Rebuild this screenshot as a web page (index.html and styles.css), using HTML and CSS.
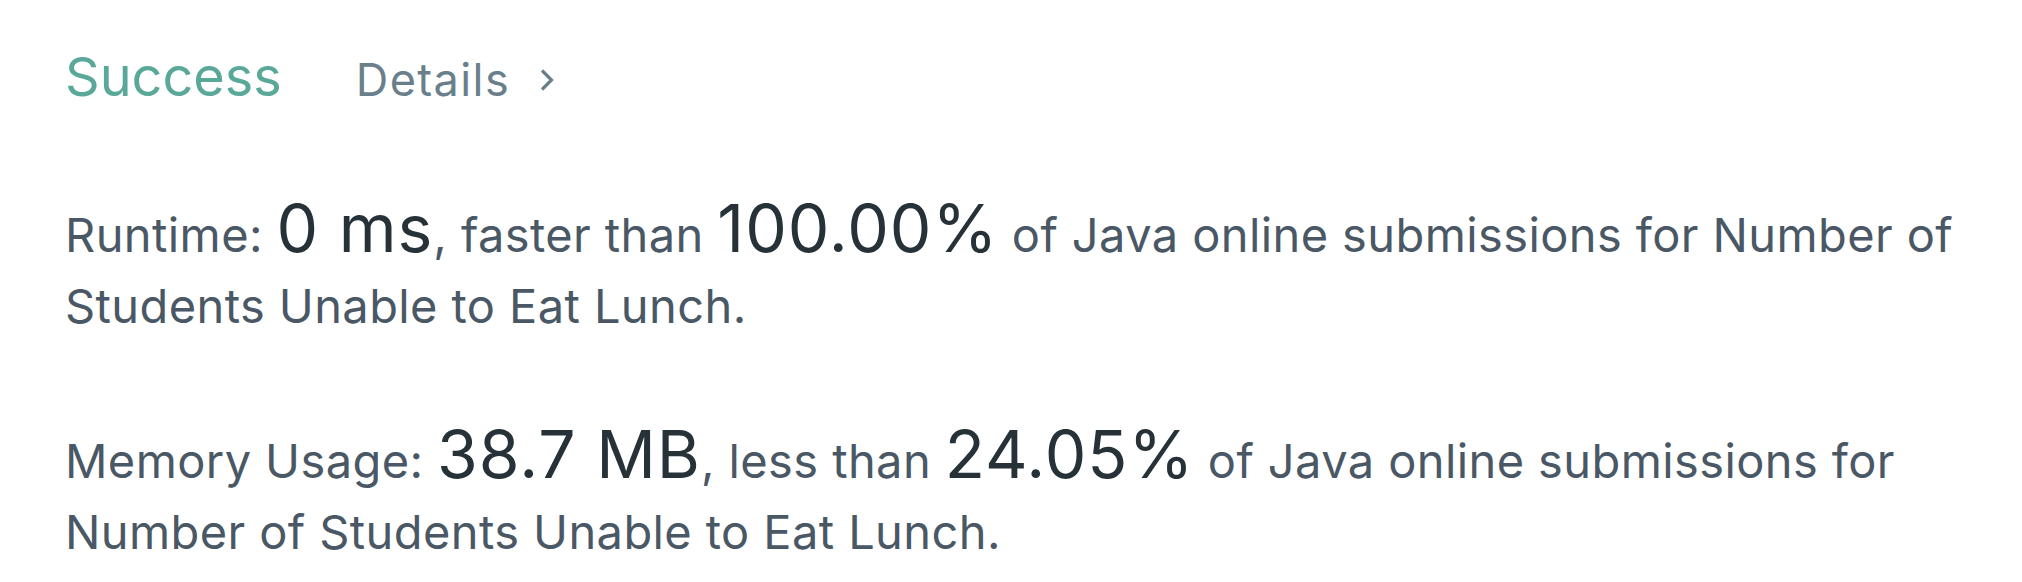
FILE: index.html
```html
<!DOCTYPE html>
<html lang="en">
<head>
<meta charset="utf-8">
<title>Submission result</title>
<link rel="stylesheet" href="styles.css">
</head>
<body>
<div class="result">
  <div class="result-header">
    <span class="status">Success</span>
    <a class="details" href="#">Details
      <svg class="chevron" viewBox="0 0 14 22" width="14" height="22" aria-hidden="true"><path d="M2 1.5 L11.5 11 L2 20.5" fill="none" stroke="currentColor" stroke-width="3.2" stroke-linejoin="miter"/></svg>
    </a>
  </div>
  <p class="stat">Runtime: <span class="big">0 ms</span>, faster than <span class="big">100.00%</span> of Java online submissions for Number of Students Unable to Eat Lunch.</p>
  <p class="stat">Memory Usage: <span class="big">38.7 MB</span>, less than <span class="big">24.05%</span> of Java online submissions for Number of Students Unable to Eat Lunch.</p>
</div>
</body>
</html>
```
FILE: styles.css
```css
html, body {
  margin: 0;
  padding: 0;
  background: #ffffff;
}
body {
  font-family: Inter, "Noto Sans", "Liberation Sans", sans-serif;
}
.result {
  padding: 50px 0 0 65px;
  width: 1900px;
}
.result-header {
  display: flex;
  align-items: baseline;
  line-height: 1;
}
.status {
  font-size: 54px;
  color: #5aa899;
}
.details {
  margin-left: 74px;
  font-size: 45px;
  letter-spacing: 1.4px;
  color: #697f8c;
  text-decoration: none;
  display: inline-flex;
  align-items: baseline;
}
.chevron {
  margin-left: 30px;
  align-self: center;
}
.stat {
  margin: 91px 0 0 0;
  font-size: 47px;
  letter-spacing: 0.4px;
  line-height: 71px;
  color: #4a5866;
}
.stat + .stat {
  margin-top: 80px;
}
.big {
  font-size: 66px;
  letter-spacing: 1px;
  line-height: 1;
  color: #263238;
}
```
